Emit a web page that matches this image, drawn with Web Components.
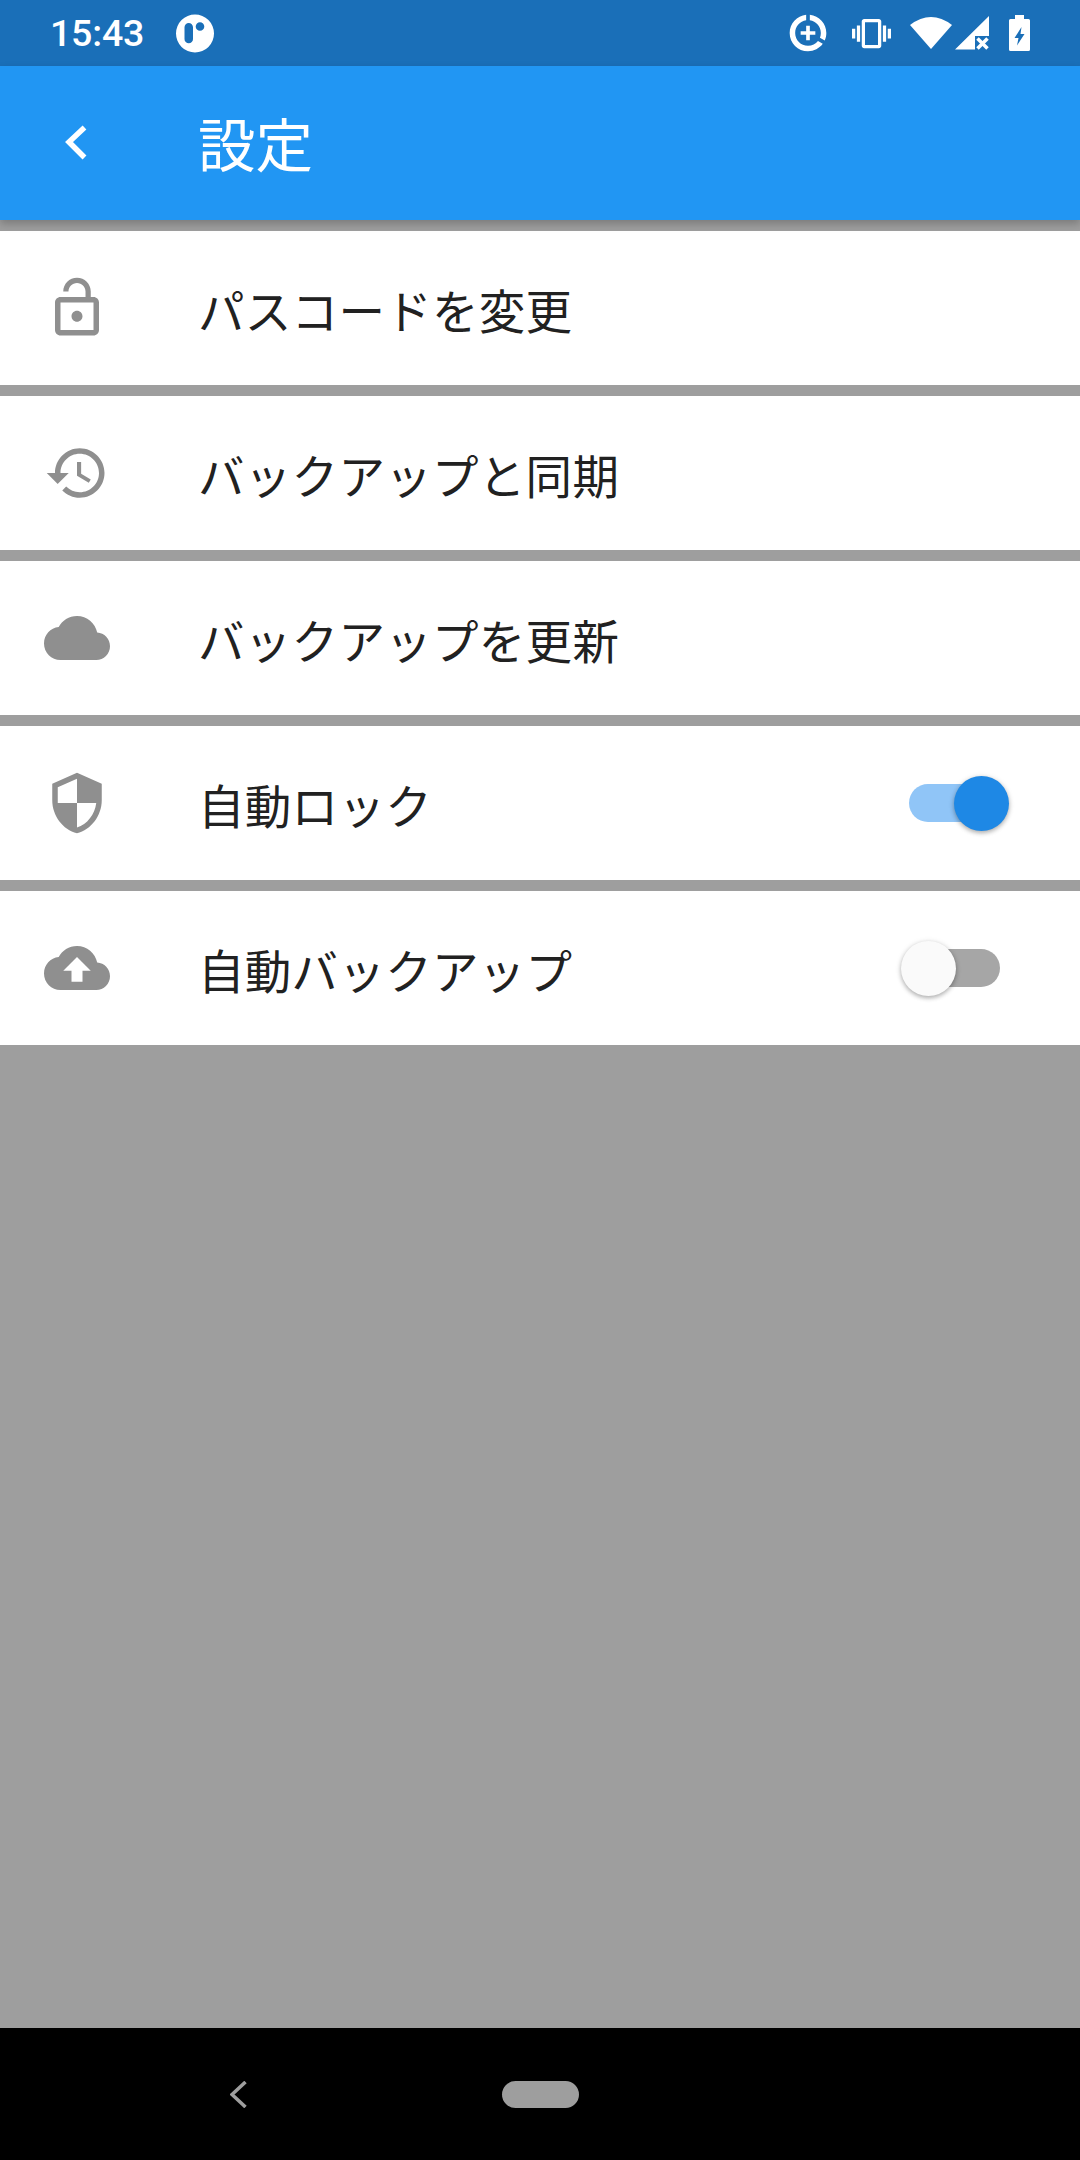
<!DOCTYPE html>
<html lang="ja"><head><meta charset="utf-8"><style>
html,body{margin:0;padding:0;background:#9e9e9e}
body{width:1080px;height:2160px;font-family:"Noto Sans CJK JP","Noto Sans",sans-serif;display:flex;flex-direction:column;overflow:hidden}
</style></head><body>
<status-bar></status-bar>
<app-bar title="設定"></app-bar>
<setting-list>
<setting-row icon="lock" label="パスコードを変更"></setting-row>
<setting-row icon="history" label="バックアップと同期"></setting-row>
<setting-row icon="cloud" label="バックアップを更新"></setting-row>
<setting-row icon="shield" label="自動ロック"><toggle-switch on></toggle-switch></setting-row>
<setting-row icon="upload" label="自動バックアップ"><toggle-switch></toggle-switch></setting-row>
</setting-list>
<nav-bar></nav-bar>
<script>
const P={
lock:"M12 17c1.1 0 2-.9 2-2s-.9-2-2-2-2 .9-2 2 .9 2 2 2zm6-9h-1V6c0-2.76-2.24-5-5-5S7 3.24 7 6h1.9c0-1.71 1.39-3.1 3.1-3.1 1.71 0 3.1 1.39 3.1 3.1v2H6c-1.1 0-2 .9-2 2v10c0 1.1.9 2 2 2h12c1.1 0 2-.9 2-2V10c0-1.1-.9-2-2-2zm0 12H6V10h12v10z",
history:"M13 3c-4.97 0-9 4.03-9 9H1l3.89 3.89.07.14L9 12H6c0-3.87 3.13-7 7-7s7 3.13 7 7-3.13 7-7 7c-1.93 0-3.68-.79-4.94-2.06l-1.42 1.42C8.27 19.99 10.51 21 13 21c4.97 0 9-4.03 9-9s-4.03-9-9-9zm-1 5v5l4.28 2.54.72-1.21-3.5-2.08V8H12z",
cloud:"M19.35 10.04C18.67 6.59 15.64 4 12 4 9.11 4 6.6 5.64 5.35 8.04 2.34 8.36 0 10.91 0 14c0 3.31 2.69 6 6 6h13c2.76 0 5-2.24 5-5 0-2.64-2.05-4.78-4.65-4.96z",
shield:"M12 1L3 5v6c0 5.55 3.84 10.74 9 12 5.16-1.26 9-6.45 9-12V5l-9-4zm0 10.99h7c-.53 4.12-3.28 7.79-7 8.94V12H5V6.3l7-3.11v8.8z",
upload:"M19.35 10.04C18.67 6.59 15.64 4 12 4 9.11 4 6.6 5.64 5.35 8.04 2.34 8.36 0 10.91 0 14c0 3.31 2.69 6 6 6h13c2.76 0 5-2.24 5-5 0-2.64-2.05-4.78-4.65-4.96zM14 13v4h-4v-4H7l5-5 5 5h-3z"};
class Base extends HTMLElement{
 constructor(){super();this.attachShadow({mode:"open"})}
}
customElements.define("status-bar",class extends Base{connectedCallback(){this.shadowRoot.innerHTML=`<style>
:host{display:flex;align-items:center;height:66px;background:#1a6fb8;color:#fff;flex:none;font:500 37.5px/1 Roboto,sans-serif;padding-left:50px;box-sizing:border-box}
.t{width:125px;position:relative;top:1px;letter-spacing:-.2px}
svg{display:block;flex:none}
.r{margin-left:auto;display:flex;align-items:center;padding-right:50px}
</style><span class="t">15:43</span>
<svg width="40" height="40" viewBox="0 0 40 40"><path fill="#fff" fill-rule="evenodd" d="M20 1.500a19 19 0 1 0 0 38a19 19 0 1 0 0-38zM13.750 10a4.250 4.250 0 0 1 4.250 4.250V26a4.250 4.250 0 0 1-8.500 0V14.250A4.250 4.250 0 0 1 13.750 10zM25 9.200a4.300 4.300 0 1 0 0 8.600a4.300 4.300 0 1 0 0-8.600z"/></svg>
<div class="r">
<svg width="44" height="44" viewBox="0 0 24 24"><path fill="#fff" d="M11 8v3H8v2h3v3h2v-3h3v-2h-3V8h-2zm2-5.950v3.030c3.390.49 6 3.390 6 6.920 0 .9-.18 1.750-.48 2.540l2.600 1.530c.56-1.240.88-2.600.88-4.070 0-5.180-3.950-9.450-9-9.950zM12 19c-3.870 0-7-3.130-7-7 0-3.530 2.610-6.430 6-6.920V2.050c-5.060.5-9 4.760-9 9.950 0 5.520 4.470 10 9.990 10 3.310 0 6.240-1.610 8.060-4.090l-2.600-1.530C16.170 17.980 14.210 19 12 19z"/></svg>
<svg style="margin-left:22px" width="39" height="39" viewBox="0 0 24 24"><path fill="#fff" d="M0 15h2V9H0v6zm3 2h2V7H3v10zm19-8v6h2V9h-2zm-3 8h2V7h-2v10zM16.500 3h-9C6.670 3 6 3.670 6 4.500v15c0 .83.67 1.500 1.500 1.500h9c.83 0 1.500-.67 1.500-1.500v-15c0-.83-.67-1.500-1.500-1.500zM16 19H8V5h8v14z"/></svg>
<svg style="margin-left:19px" width="42" height="32" viewBox="0 0 42 32"><path fill="#fff" d="M0 8Q21-8 42 8L21 32Z"/></svg>
<svg style="margin-left:3px" width="34" height="34" viewBox="0 0 34 34"><path fill="#fff" d="M0 33.500L34 0V20H20V33.500Z"/><path stroke="#fff" stroke-width="3.500" d="M22.500 22.500L32.500 32.500M32.500 22.500L22.500 32.500" fill="none"/></svg>
<svg style="margin-left:20px" width="21" height="36" viewBox="0 0 21 36"><path fill="#fff" fill-rule="evenodd" d="M6 0h9v4h4.500q1.500 0 1.500 1.500V34.500q0 1.500-1.500 1.500H1.500Q0 36 0 34.500V5.500Q0 4 1.500 4H6ZM12.500 12L5.500 23H9.500L8 30.500L15.500 19H11.500Z"/></svg>
</div>`}});
customElements.define("app-bar",class extends Base{connectedCallback(){this.shadowRoot.innerHTML=`<style>
:host{display:flex;align-items:center;height:154px;background:#2196f3;color:#fff;flex:none;position:relative;z-index:2;box-shadow:0 4px 8px rgba(0,0,0,.22)}
svg{display:block;margin-left:44px;flex:none}
.t{margin-left:88px;font-size:57.500px;line-height:1}
</style><svg width="66" height="66" viewBox="0 0 66 66"><path d="M40.500 24L25 38.500L40.500 54" fill="none" stroke="#fff" stroke-width="5.500" transform="translate(0,-6.500)"/></svg><span class="t">${this.getAttribute("title")}</span>`}});
customElements.define("setting-list",class extends Base{connectedCallback(){this.shadowRoot.innerHTML=`<style>
:host{display:flex;flex-direction:column;gap:11px;flex:1;padding-top:11px;box-sizing:border-box}
</style><slot></slot>`}});
customElements.define("setting-row",class extends Base{connectedCallback(){this.shadowRoot.innerHTML=`<style>
:host{display:flex;align-items:center;height:154px;background:#fff;color:#212121;flex:none}
svg{display:block;margin-left:44px;flex:none;fill:#8f8f8f}
.l{margin-left:88px;font-size:46.500px;line-height:1;flex:1;letter-spacing:.3px;padding-top:2px}
</style><svg width="66" height="66" viewBox="0 0 24 24"><path d="${P[this.getAttribute("icon")]}"/></svg><span class="l">${this.getAttribute("label")}</span><slot></slot>`}});
customElements.define("toggle-switch",class extends Base{connectedCallback(){const on=this.hasAttribute("on");this.shadowRoot.innerHTML=`<style>
:host{display:block;width:91px;height:38.500px;border-radius:20px;margin-right:80px;position:relative;flex:none;background:${on?"#90c5f7":"#a6a6a6"}}
i{position:absolute;top:-8.250px;width:55px;height:55px;border-radius:50%;${on?"right:-8.500px":"left:-8.500px"};background:${on?"#1e88e5":"#fafafa"};box-shadow:0 2px 4px rgba(0,0,0,.25),0 1px 6px rgba(0,0,0,.12)}
</style><i></i>`}});
customElements.define("nav-bar",class extends Base{connectedCallback(){this.shadowRoot.innerHTML=`<style>
:host{display:flex;align-items:center;height:132px;background:#000;flex:none;padding-left:230px;box-sizing:border-box}
b{display:block;width:77px;height:27px;border-radius:14px;background:#9e9e9e;margin-left:255px}
svg{display:block;flex:none}
</style><svg width="17" height="27" viewBox="0 0 17 27"><path d="M15.500 1L2 13.500L15.500 26" fill="none" stroke="#9e9e9e" stroke-width="3.500"/></svg><b></b>`}});
</script>
</body></html>
